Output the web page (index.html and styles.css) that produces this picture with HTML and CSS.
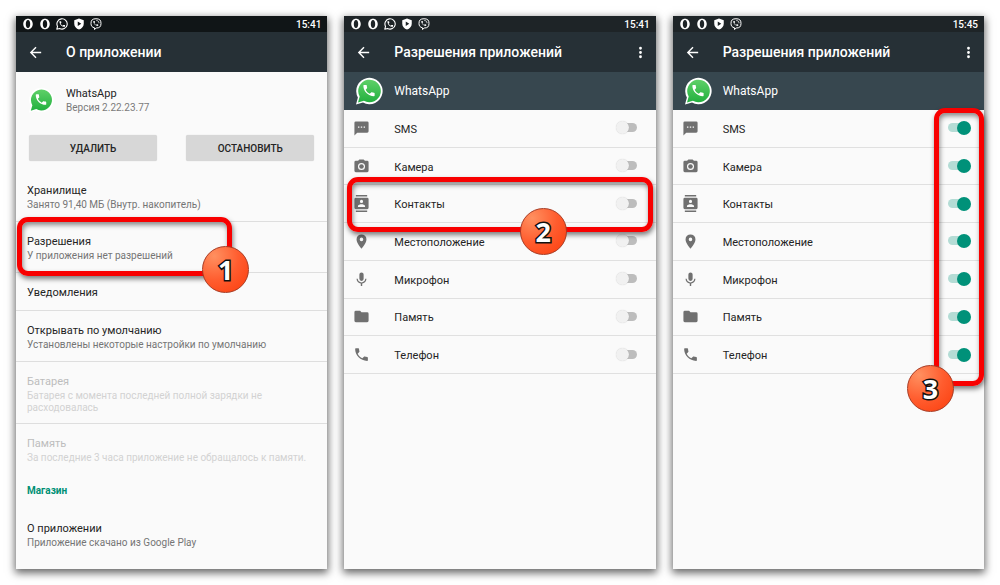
FILE: index.html
```html
<!DOCTYPE html>
<html lang="ru">
<head>
<meta charset="utf-8">
<meta name="viewport" content="width=device-width, initial-scale=1">
<title>Разрешения приложений</title>
<link rel="stylesheet" href="styles.css">
</head>
<body>
<svg class="sprite" aria-hidden="true">
  <defs>
    <linearGradient id="wa-green" x1="0" y1="0" x2="0" y2="1">
      <stop offset="0" stop-color="#5fd068"/>
      <stop offset="1" stop-color="#22b03f"/>
    </linearGradient>
  </defs>
  <symbol id="opera" viewBox="0 0 24 24"><path fill-rule="evenodd" d="M12 1.500C17.500 1.500 21.500 6 21.500 12S17.500 22.500 12 22.500 2.500 18 2.500 12 6.500 1.500 12 1.500zM12 4C9 4 7.600 8 7.600 12S9 20 12 20 16.400 16 16.400 12 15 4 12 4z"/></symbol>
  <symbol id="handset" viewBox="0 0 24 24"><path d="M6.620 10.790c1.440 2.830 3.760 5.140 6.590 6.590l2.200-2.200c.270-.270.670-.360 1.020-.240 1.120.370 2.330.570 3.570.570.550 0 1 .450 1 1V20c0 .550-.450 1-1 1-9.390 0-17-7.610-17-17 0-.550.450-1 1-1h3.500c.550 0 1 .450 1 1 0 1.250.200 2.450.570 3.570.110.350.030.740-.250 1.020l-2.200 2.200z"/></symbol>
  <symbol id="wa-line" viewBox="0 0 24 24"><path fill="none" stroke="currentColor" stroke-width="2.200" stroke-linejoin="round" d="M1.600 22.400l1.500-5.500A10.300 10.300 0 1 1 7.200 21z"/><use href="#handset" x="5" y="4.500" width="15" height="15"/></symbol>
  <symbol id="shield" viewBox="0 0 24 24"><path fill-rule="evenodd" d="M12 1l9.500 3.500v7c0 5.500-4 9.800-9.500 11.500-5.500-1.700-9.500-6-9.500-11.500v-7zM9.500 7v9l7-4.500z"/></symbol>
  <symbol id="viber" viewBox="0 0 24 24"><path fill="none" stroke="currentColor" stroke-width="2" stroke-linejoin="round" d="M12 1.500c7 0 10 2.500 10 9.300S19 20 12.500 20L9 23v-3.400C4 18.500 2 16 2 10.800 2 4 5 1.500 12 1.500z"/><use href="#handset" x="5" y="4.500" width="13" height="13"/><path fill="none" stroke="currentColor" stroke-width="1.500" d="M12.500 5c3.500 0 5.500 2 5.500 5.500"/></symbol>
  <symbol id="back" viewBox="0 0 24 24"><path d="M20 11H7.830l5.590-5.590L12 4l-8 8 8 8 1.410-1.410L7.830 13H20v-2z"/></symbol>
  <symbol id="more" viewBox="0 0 24 24"><path d="M12 8a2 2 0 1 0 0-4 2 2 0 0 0 0 4zm0 2a2 2 0 1 0 0 4 2 2 0 0 0 0-4zm0 6a2 2 0 1 0 0 4 2 2 0 0 0 0-4z"/></symbol>
  <symbol id="whatsapp" viewBox="0 0 28 28"><path fill="#fff" d="M1 27.500l1.900-7A13.200 13.200 0 1 1 8 25.600z"/><path fill="url(#wa-green)" d="M3 25.500l1.700-5.900A11.300 11.300 0 1 1 8.900 23.800z"/><use href="#handset" x="6.500" y="6" width="15" height="15" fill="#fff"/></symbol>
  <symbol id="sms" viewBox="0 0 24 24"><path d="M20 2H4a2 2 0 0 0-2 2v18l4-4h14a2 2 0 0 0 2-2V4a2 2 0 0 0-2-2zM9 11H7V9h2v2zm4 0h-2V9h2v2zm4 0h-2V9h2v2z"/></symbol>
  <symbol id="camera" viewBox="0 0 24 24"><circle cx="12" cy="12" r="3.200"/><path d="M9 2L7.170 4H4a2 2 0 0 0-2 2v12a2 2 0 0 0 2 2h16a2 2 0 0 0 2-2V6a2 2 0 0 0-2-2h-3.170L15 2H9zm3 15a5 5 0 1 1 0-10 5 5 0 0 1 0 10z"/></symbol>
  <symbol id="contacts" viewBox="0 0 24 24"><path d="M20 0H4v2h16V0zM4 24h16v-2H4v2zM20 4H4a2 2 0 0 0-2 2v12a2 2 0 0 0 2 2h16a2 2 0 0 0 2-2V6a2 2 0 0 0-2-2zm-8 2.750a2.250 2.250 0 1 1 0 4.500 2.250 2.250 0 0 1 0-4.500zM17 17H7v-1.500c0-1.670 3.330-2.500 5-2.500s5 .830 5 2.500V17z"/></symbol>
  <symbol id="place" viewBox="0 0 24 24"><path d="M12 2a7 7 0 0 0-7 7c0 5.250 7 13 7 13s7-7.750 7-13a7 7 0 0 0-7-7zm0 9.500a2.500 2.500 0 1 1 0-5 2.500 2.500 0 0 1 0 5z"/></symbol>
  <symbol id="mic" viewBox="0 0 24 24"><path d="M12 14c1.660 0 2.990-1.340 2.990-3L15 5a3 3 0 0 0-6 0v6a3 3 0 0 0 3 3zm5.300-3c0 3-2.540 5.100-5.300 5.100S6.700 14 6.700 11H5c0 3.410 2.720 6.230 6 6.720V21h2v-3.280c3.280-.480 6-3.300 6-6.720h-1.700z"/></symbol>
  <symbol id="folder" viewBox="0 0 24 24"><path d="M10 4H4a2 2 0 0 0-2 2v12a2 2 0 0 0 2 2h16a2 2 0 0 0 2-2V8a2 2 0 0 0-2-2h-8l-2-2z"/></symbol>
</svg>

<main class="screens">
  <section class="phone">
    <div class="status">
      <svg><use href="#opera"/></svg><svg><use href="#opera"/></svg><svg><use href="#wa-line"/></svg><svg><use href="#shield"/></svg><svg><use href="#viber"/></svg>
      <time>15:41</time>
    </div>
    <header class="toolbar">
      <button class="icon-button" aria-label="Назад"><svg><use href="#back"/></svg></button>
      <h1>О приложении</h1>
    </header>
    <div class="app-info">
      <svg class="logo"><use href="#whatsapp"/></svg>
      <div>
        <h2>WhatsApp</h2>
        <p>Версия 2.22.23.77</p>
      </div>
    </div>
    <div class="actions">
      <button>УДАЛИТЬ</button>
      <button>ОСТАНОВИТЬ</button>
    </div>
    <ul class="settings">
      <li><h3>Хранилище</h3><p>Занято 91,40 МБ (Внутр. накопитель)</p></li>
      <li class="marked"><h3>Разрешения</h3><p>У приложения нет разрешений</p>
        <div class="frame frame-item"><span class="badge">1</span></div></li>
      <li class="single"><h3>Уведомления</h3></li>
      <li><h3>Открывать по умолчанию</h3><p>Установлены некоторые настройки по умолчанию</p></li>
      <li class="disabled"><h3>Батарея</h3><p>Батарея с момента последней полной зарядки не<br>расходовалась</p></li>
      <li class="disabled last"><h3>Память</h3><p>За последние 3 часа приложение не обращалось к памяти.</p></li>
    </ul>
    <h2 class="section">Магазин</h2>
    <ul class="settings">
      <li class="last"><h3>О приложении</h3><p>Приложение скачано из Google Play</p></li>
    </ul>
  </section>

  <section class="phone">
    <div class="status">
      <svg><use href="#opera"/></svg><svg><use href="#opera"/></svg><svg><use href="#wa-line"/></svg><svg><use href="#shield"/></svg><svg><use href="#viber"/></svg>
      <time>15:41</time>
    </div>
    <header class="toolbar">
      <button class="icon-button" aria-label="Назад"><svg><use href="#back"/></svg></button>
      <h1>Разрешения приложений</h1>
      <button class="icon-button" aria-label="Меню"><svg><use href="#more"/></svg></button>
    </header>
    <div class="app-bar"><svg class="logo"><use href="#whatsapp"/></svg><h2>WhatsApp</h2></div>
    <ul class="permissions">
      <li><label><svg><use href="#sms"/></svg><span>SMS</span><input type="checkbox"></label></li>
      <li><label><svg><use href="#camera"/></svg><span>Камера</span><input type="checkbox"></label></li>
      <li class="marked"><label><svg><use href="#contacts"/></svg><span>Контакты</span><input type="checkbox"></label>
        <div class="frame frame-row"><b class="badge">2</b></div></li>
      <li><label><svg><use href="#place"/></svg><span>Местоположение</span><input type="checkbox"></label></li>
      <li><label><svg><use href="#mic"/></svg><span>Микрофон</span><input type="checkbox"></label></li>
      <li><label><svg><use href="#folder"/></svg><span>Память</span><input type="checkbox"></label></li>
      <li><label><svg><use href="#handset"/></svg><span>Телефон</span><input type="checkbox"></label></li>
    </ul>
  </section>

  <section class="phone">
    <div class="status">
      <svg><use href="#opera"/></svg><svg><use href="#opera"/></svg><svg><use href="#shield"/></svg><svg><use href="#viber"/></svg>
      <time>15:45</time>
    </div>
    <header class="toolbar">
      <button class="icon-button" aria-label="Назад"><svg><use href="#back"/></svg></button>
      <h1>Разрешения приложений</h1>
      <button class="icon-button" aria-label="Меню"><svg><use href="#more"/></svg></button>
    </header>
    <div class="app-bar"><svg class="logo"><use href="#whatsapp"/></svg><h2>WhatsApp</h2></div>
    <div class="marked">
      <ul class="permissions">
        <li><label><svg><use href="#sms"/></svg><span>SMS</span><input type="checkbox" checked></label></li>
        <li><label><svg><use href="#camera"/></svg><span>Камера</span><input type="checkbox" checked></label></li>
        <li><label><svg><use href="#contacts"/></svg><span>Контакты</span><input type="checkbox" checked></label></li>
        <li><label><svg><use href="#place"/></svg><span>Местоположение</span><input type="checkbox" checked></label></li>
        <li><label><svg><use href="#mic"/></svg><span>Микрофон</span><input type="checkbox" checked></label></li>
        <li><label><svg><use href="#folder"/></svg><span>Память</span><input type="checkbox" checked></label></li>
        <li><label><svg><use href="#handset"/></svg><span>Телефон</span><input type="checkbox" checked></label></li>
      </ul>
      <div class="frame frame-column"><span class="badge">3</span></div>
    </div>
  </section>
</main>
</body>
</html>
```
FILE: styles.css
```css
* { box-sizing: border-box; }

body {
  margin: 0;
  background: #fff;
  color: #242424;
  font-family: Roboto, "Noto Sans", sans-serif;
  font-size: 11px;
}

h1, h2, h3, p, ul { margin: 0; padding: 0; font-weight: 400; }
ul { list-style: none; }
button { border: 0; padding: 0; font: inherit; color: inherit; }
svg { display: block; flex: none; fill: currentColor; }
.sprite { position: absolute; width: 0; height: 0; }

.screens {
  display: grid;
  grid-template-columns: repeat(3, 1fr);
  gap: 17px;
  min-height: 100vh;
  padding: 16px;
}

.phone {
  background: #fafafa;
  box-shadow: 0 3px 8px 1px rgba(0, 0, 0, 0.6);
}

/* System status bar */
.status {
  display: flex;
  align-items: center;
  gap: 5px;
  height: 16px;
  padding: 0 6px;
  background: #1e2427;
  color: #fff;
}
.phone:first-child .status { background: #101517; }
.status svg { width: 12px; height: 12px; }
.status time { margin-left: auto; font-size: 10px; font-weight: 500; }

/* Toolbar */
.toolbar {
  display: flex;
  align-items: center;
  height: 40px;
  padding: 0 7px 0 11px;
  background: #263036;
  color: #fff;
}
.toolbar h1 { flex: 1; padding-left: 22px; font-size: 14px; font-weight: 500; }
.icon-button { background: none; }
.icon-button svg { width: 17px; height: 17px; }

/* App details */
.app-info { display: flex; align-items: center; gap: 12px; height: 56px; padding: 0 12px; }
.app-info .logo { width: 26px; height: 26px; }
.app-info h2 { font-size: 11px; line-height: 14px; }
.app-info p { color: #7a7a7a; font-size: 10px; line-height: 13px; }

.actions { display: grid; grid-template-columns: 1fr 1fr; gap: 29px; padding: 7px 13px 10px; }
.actions button {
  height: 26px;
  border-radius: 2px;
  background: #d7d7d7;
  box-shadow: 0 0 1px rgba(0, 0, 0, 0.2);
  font-size: 10px;
  font-weight: 500;
}

.settings li { border-bottom: 1px solid #dedede; padding: 12px 11px 10px; }
.settings h3 { font-size: 11px; line-height: 16px; }
.settings p { color: #757575; font-size: 10px; line-height: 12px; }
.settings .single { padding: 12px 11px 9px; }
.settings .disabled { padding-bottom: 9px; }
.settings .last { border-bottom: 0; }
.settings .disabled h3 { color: #bdbdbd; }
.settings .disabled p { color: #d2d2d2; }
.section { padding: 10px 11px; color: #009075; font-size: 10px; font-weight: 700; line-height: 16px; }

/* Permission list */
.app-bar {
  display: flex;
  align-items: center;
  gap: 11px;
  height: 38px;
  padding: 0 11px;
  background: #37474f;
  color: #fff;
}
.app-bar .logo { width: 28px; height: 28px; }
.app-bar h2 { font-size: 12px; }

.permissions { display: grid; grid-auto-rows: 1fr; min-height: 264px; }
.permissions li { border-bottom: 1px solid #e0e0e0; }
.permissions label { display: flex; align-items: center; height: 100%; padding: 0 13px 0 9px; }
.permissions svg { width: 17px; height: 17px; color: #707070; }
.permissions label span { flex: 1; padding: 2px 0 0 24px; font-size: 11px; }

.permissions input {
  position: relative;
  appearance: none;
  width: 27px;
  height: 14px;
  margin: 0;
}
.permissions input::before {
  content: "";
  position: absolute;
  inset: 2px 6px 3px 4px;
  border-radius: 5px;
  background: #bdbdbd;
}
.permissions input::after {
  content: "";
  position: absolute;
  top: 0;
  left: 0;
  width: 13px;
  height: 13px;
  border-radius: 50%;
  background: #f1f1f1;
  box-shadow: 0 0 1px rgba(0, 0, 0, 0.2);
}
.permissions input:checked::before { background: #b4dcd5; }
.permissions input:checked::after {
  left: 13px;
  width: 14px;
  height: 14px;
  background: #009179;
  box-shadow: none;
}

/* Callout frames and step numbers */
.marked { position: relative; }
.frame {
  position: absolute;
  z-index: 1;
  border: 5px solid #f80000;
  border-radius: 11px;
  box-shadow: 1px 3px 5px rgba(0, 0, 0, 0.5), inset 1px 3px 5px rgba(0, 0, 0, 0.45);
  pointer-events: none;
}
.frame-item { inset: -5px 95px -4px 1px; }
.frame-row { inset: -8px 3px -10px 3px; }
.frame-column { top: -2px; right: 0; bottom: -12px; width: 50px; }

.frame .badge {
  position: absolute;
  display: grid;
  place-items: center;
  width: 47px;
  height: 47px;
  border: 1px solid #a83a22;
  border-radius: 50%;
  background: radial-gradient(circle at 25% 20%, #ff9060, #ff5c2e 50%, #fb3d0c);
  color: #fff;
  font: 700 27px "Open Sans", "Noto Sans", sans-serif;
  -webkit-text-stroke: 3px #111;
  paint-order: stroke fill;
}
.frame-item .badge { right: -22px; bottom: -22px; }
.frame-row .badge { right: 81px; bottom: -28px; }
.frame-column .badge { left: -32px; bottom: -31px; }
```
